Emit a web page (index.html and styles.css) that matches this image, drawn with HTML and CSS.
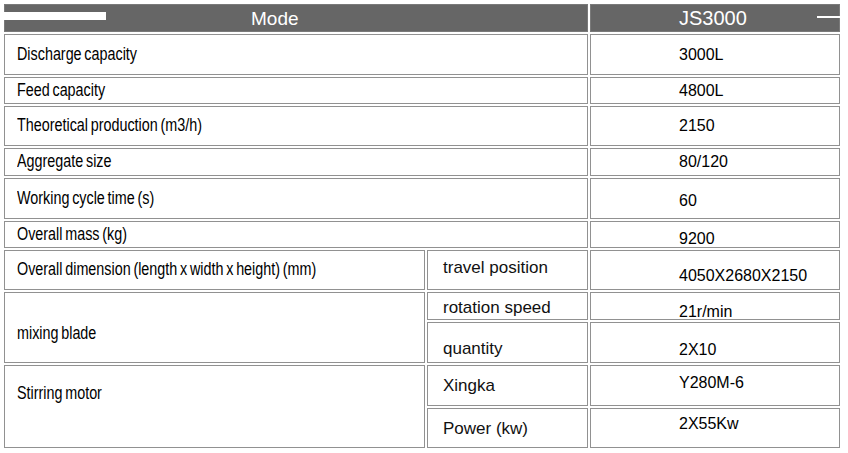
FILE: index.html
```html
<!DOCTYPE html>
<html lang="en">
<head>
<meta charset="utf-8">
<title>JS3000 specifications</title>
<link rel="stylesheet" href="styles.css">
</head>
<body>
<div class="spec">
  <div class="cell head head-mode span2"><span class="deco-bar"></span>Mode</div>
  <div class="cell head head-model"><span class="deco-line"></span>JS3000</div>

  <div class="cell label span2"><span class="narrow">Discharge capacity</span></div>
  <div class="cell value">3000L</div>

  <div class="cell label span2"><span class="narrow">Feed capacity</span></div>
  <div class="cell value">4800L</div>

  <div class="cell label span2"><span class="narrow">Theoretical production (m3/h)</span></div>
  <div class="cell value">2150</div>

  <div class="cell label span2"><span class="narrow">Aggregate size</span></div>
  <div class="cell value">80/120</div>

  <div class="cell label span2"><span class="narrow">Working cycle time (s)</span></div>
  <div class="cell value dn2">60</div>

  <div class="cell label span2"><span class="narrow">Overall mass (kg)</span></div>
  <div class="cell value dn4">9200</div>

  <div class="cell label"><span class="narrow">Overall dimension (length x width x height) (mm)</span></div>
  <div class="cell sub up2">travel position</div>
  <div class="cell value dn5">4050X2680X2150</div>

  <div class="cell label rows2 dn6"><span class="narrow">mixing blade</span></div>
  <div class="cell sub dn1">rotation speed</div>
  <div class="cell value dn5">21r/min</div>
  <div class="cell sub dn6">quantity</div>
  <div class="cell value dn7">2X10</div>

  <div class="cell label rows2 up12"><span class="narrow">Stirring motor</span></div>
  <div class="cell sub">Xingka</div>
  <div class="cell value up3">Y280M-6</div>
  <div class="cell sub">Power (kw)</div>
  <div class="cell value up4">2X55Kw</div>
</div>
</body>
</html>
```

FILE: styles.css
```css
html, body {
  margin: 0;
  padding: 0;
  background: #ffffff;
}

body {
  padding: 4px 0 0 4px;
  font-family: "Liberation Sans", Arial, sans-serif;
  color: #000000;
}

.spec {
  display: grid;
  grid-template-columns: 421px 161px 250px;
  grid-template-rows: 28px 41px 27px 40px 28px 41px 27px 40px 28px 41px 41px 40px;
  gap: 2px;
  width: 836px;
}

.cell {
  box-sizing: border-box;
  border: 1px solid #919191;
  display: flex;
  align-items: center;
  white-space: nowrap;
  line-height: 1;
}

.span2 {
  grid-column: span 2;
}

.rows2 {
  grid-row: span 2;
}

.head {
  position: relative;
  background: #666666;
  border-color: #7a7a7a;
  color: #ffffff;
  font-size: 19px;
}

.head-mode {
  padding-left: 246px;
}

.head-model {
  padding-left: 88px;
  font-size: 20px;
}

.deco-bar {
  position: absolute;
  left: -1px;
  top: 7px;
  width: 102px;
  height: 8px;
  background: #ffffff;
}

.deco-line {
  position: absolute;
  right: -1px;
  top: 11px;
  width: 23px;
  height: 2px;
  background: #ffffff;
}

.label {
  padding-left: 12px;
  font-size: 17.5px;
}

.narrow {
  display: inline-block;
  transform: scaleX(0.82);
  transform-origin: left center;
  word-spacing: -1.5px;
}

.sub {
  padding-left: 15px;
  font-size: 17px;
  color: #111111;
}

.value {
  padding-left: 88px;
  font-size: 16px;
}

/* small vertical nudges of text inside its cell, as in the source table */
.dn1 { padding-top: 3px; }
.dn2 { padding-top: 4px; }
.dn4 { padding-top: 8px; }
.dn5 { padding-top: 11px; }
.dn6 { padding-top: 12px; }
.dn7 { padding-top: 14px; }
.up2 { padding-bottom: 5px; }
.up3 { padding-bottom: 6px; }
.up4 { padding-bottom: 9px; }
.up12 { padding-bottom: 26px; }
```
